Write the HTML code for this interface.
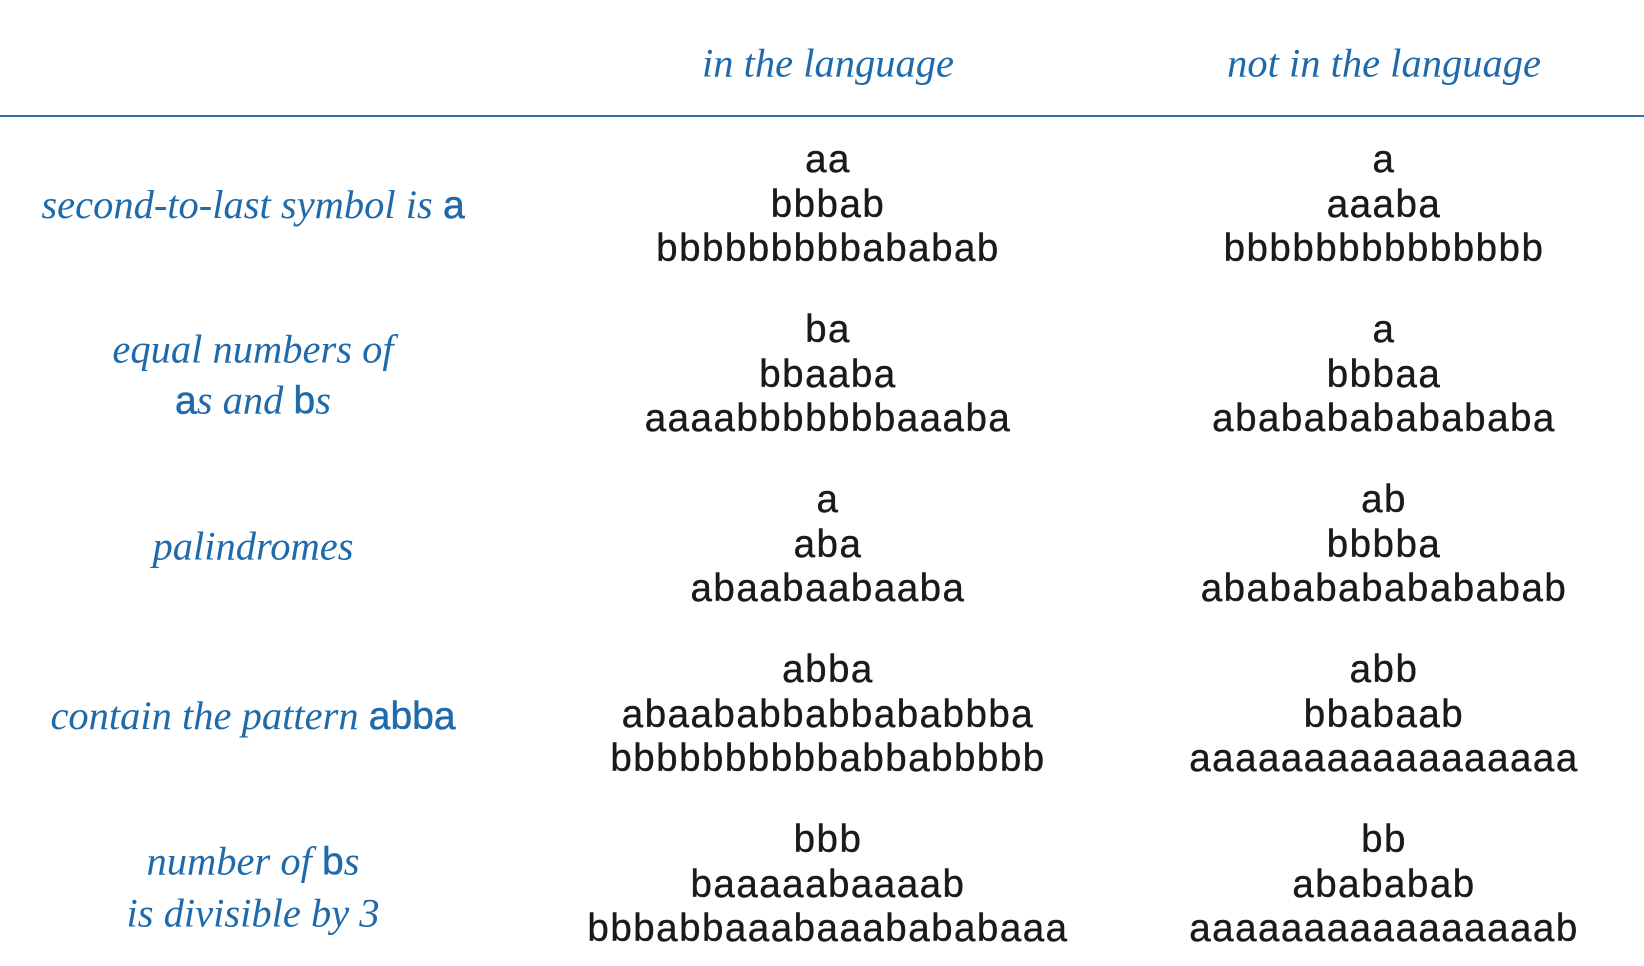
<!DOCTYPE html>
<html><head><style>
html,body{margin:0;padding:0;background:#fff;width:1644px;height:966px;overflow:hidden;position:relative}
.h,.l{position:absolute;font-family:"Liberation Serif",serif;font-style:italic;color:#1f6aab;font-size:40.5px;white-space:nowrap;transform:translate(-50%,-50%);text-align:center;line-height:51px}
.s{position:absolute;font-family:"Liberation Sans",sans-serif;color:#1a1a1a;font-size:38.5px;letter-spacing:1.5px;white-space:nowrap;transform:translate(-50%,-50%);line-height:44.6px;text-align:center;-webkit-text-stroke:0.4px #1a1a1a}
.u{font-family:"Liberation Sans",sans-serif;font-style:normal;font-size:39px;-webkit-text-stroke:0.5px #1f6aab}
.line{position:absolute;left:0;top:115px;width:1644px;height:2px;background:#2a6fae}
</style></head><body>
<div class="h" style="left:828px;top:63px">in the language</div>
<div class="h" style="left:1384px;top:63px">not in the language</div>
<div class="line"></div>

<div class="l" style="left:253px;top:205px">second-to-last symbol is <span class="u">a</span></div>
<div class="s" style="left:828px;top:205px">aa<br>bbbab<br>bbbbbbbbbababab</div>
<div class="s" style="left:1384px;top:205px">a<br>aaaba<br>bbbbbbbbbbbbbb</div>

<div class="l" style="left:253px;top:375px">equal numbers of<br><span class="u">a</span>s and <span class="u">b</span>s</div>
<div class="s" style="left:828px;top:375px">ba<br>bbaaba<br>aaaabbbbbbbaaaba</div>
<div class="s" style="left:1384px;top:375px">a<br>bbbaa<br>abababababababa</div>

<div class="l" style="left:253px;top:546px">palindromes</div>
<div class="s" style="left:828px;top:545px">a<br>aba<br>abaabaabaaba</div>
<div class="s" style="left:1384px;top:545px">ab<br>bbbba<br>abababababababab</div>

<div class="l" style="left:253px;top:716px">contain the pattern <span class="u">abba</span></div>
<div class="s" style="left:828px;top:715px">abba<br>abaababbabbababbba<br>bbbbbbbbbbabbabbbbb</div>
<div class="s" style="left:1384px;top:715px">abb<br>bbabaab<br>aaaaaaaaaaaaaaaaa</div>

<div class="l" style="left:253px;top:887px">number of <span class="u">b</span>s<br>is divisible by 3</div>
<div class="s" style="left:828px;top:885px">bbb<br>baaaaabaaaab<br>bbbabbaaabaaabababaaa</div>
<div class="s" style="left:1384px;top:885px">bb<br>abababab<br>aaaaaaaaaaaaaaaab</div>
</body></html>
